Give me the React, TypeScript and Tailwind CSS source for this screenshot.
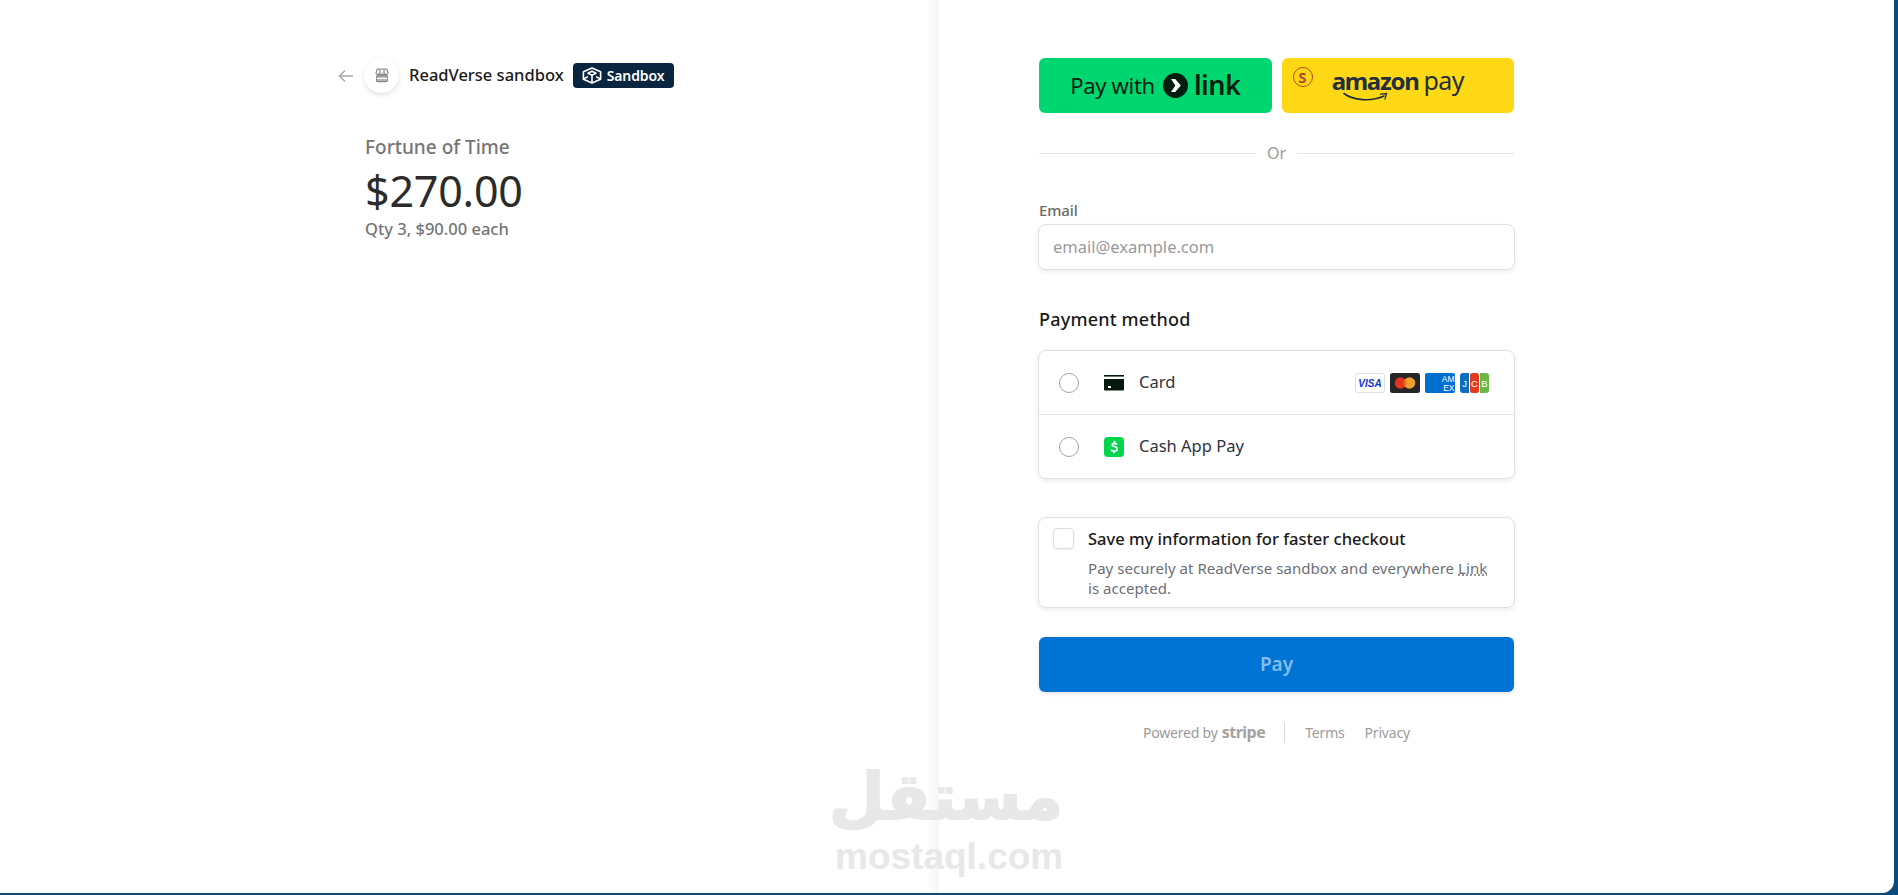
const sans = { fontFamily: '"Noto Sans", "Open Sans", sans-serif' };

const StoreIcon = () => (
  <svg width="14" height="15" viewBox="0 0 14 15" fill="none" stroke="#8a8a8a" strokeWidth="1.2">
    <path d="M2.2 1h9.6l1.2 4a1.6 1.6 0 0 1-3 .6 1.6 1.6 0 0 1-3 0 1.6 1.6 0 0 1-3 0 1.6 1.6 0 0 1-3-.6z" />
    <path d="M5 1v4.5M9 1v4.5" />
    <rect x="1.6" y="7.6" width="10.8" height="6" rx="1" fill="#b5b5b5" stroke="#8a8a8a" />
    <path d="M1.8 10.4h10.4" stroke="#fff" />
  </svg>
);

const SandboxIcon = () => (
  <svg width="20" height="17" viewBox="0 0 20 17" fill="none" stroke="#fff" strokeWidth="1.6" strokeLinejoin="round">
    <path d="M10 1l8.6 3.8v7.4L10 16l-8.6-3.8V4.8z" />
    <path d="M6 6.2l4-1.9 4 1.9-4 2z" />
    <path d="M1.6 12L6 9.6M18.4 12L14 9.6M10 8.2V16" />
  </svg>
);

const CardIcon = () => (
  <svg width="20" height="16" viewBox="0 0 20 16">
    <rect x="0" y="0" width="20" height="1.6" fill="#06190f" />
    <path d="M0 4h20v10.4a1 1 0 0 1-1 1H1a1 1 0 0 1-1-1z" fill="#06190f" />
    <rect x="4" y="11" width="3" height="2" fill="#fff" />
  </svg>
);

const CashAppIcon = () => (
  <svg width="20" height="20" viewBox="0 0 20 20">
    <rect width="20" height="20" rx="4" fill="#00d54b" />
    <path d="M13.2 7.4A4.6 4.6 0 0 0 10.4 6.4c-1.3 0-2.2.6-2.2 1.5 0 2.1 5 1.1 5 4 0 1.3-1.2 2.2-3.1 2.2a5 5 0 0 1-3.2-1.1" fill="none" stroke="#fff" strokeWidth="1.7" />
    <path d="M10.6 3.8v2.4M9.8 13.8v2.4" stroke="#fff" strokeWidth="1.7" />
  </svg>
);

const Visa = () => (
  <svg width="30" height="20" viewBox="0 0 30 20">
    <rect x="0.5" y="0.5" width="29" height="19" rx="2" fill="#fff" stroke="#dcdfe3" />
    <text x="15" y="14" textAnchor="middle" fontSize="10" fontWeight="700" fontStyle="italic" fill="#1434cb" fontFamily="Liberation Sans, sans-serif">VISA</text>
  </svg>
);

const Mastercard = () => (
  <svg width="30" height="20" viewBox="0 0 30 20">
    <rect width="30" height="20" rx="2.5" fill="#252525" />
    <circle cx="10.5" cy="10" r="5.8" fill="#e5321c" />
    <circle cx="19.5" cy="10" r="5.8" fill="#eba12c" />
    <path d="M15 6.3a5.8 5.8 0 0 1 0 7.4 5.8 5.8 0 0 1 0-7.4z" fill="#ef6a1f" />
  </svg>
);

const Amex = () => (
  <svg width="30" height="20" viewBox="0 0 30 20">
    <rect width="30" height="20" rx="2" fill="#016fd0" />
    <text x="29.5" y="9" textAnchor="end" fontSize="8.5" fill="#fff" fontFamily="Liberation Sans, sans-serif">AM</text>
    <text x="29.5" y="17.5" textAnchor="end" fontSize="8.5" fill="#fff" fontFamily="Liberation Sans, sans-serif">EX</text>
  </svg>
);

const Jcb = () => (
  <svg width="29" height="20" viewBox="0 0 29 20">
    <path d="M3 0h6v20H3a3 3 0 0 1-3-3V3a3 3 0 0 1 3-3z" fill="#0b6fc2" />
    <rect x="10" width="9" height="20" rx="2.5" fill="#e53a22" />
    <path d="M20 0h6a3 3 0 0 1 3 3v14a3 3 0 0 1-3 3h-6z" fill="#6cb847" />
    <text x="4.5" y="14" textAnchor="middle" fontSize="9.5" fill="#fff" fontFamily="Liberation Sans, sans-serif">J</text>
    <text x="14.5" y="14" textAnchor="middle" fontSize="9.5" fill="#fff" fontFamily="Liberation Sans, sans-serif">C</text>
    <text x="24.5" y="14" textAnchor="middle" fontSize="9.5" fill="#fff" fontFamily="Liberation Sans, sans-serif">B</text>
  </svg>
);

const LinkChevron = () => (
  <svg width="25" height="25" viewBox="0 0 25 25">
    <circle cx="12.5" cy="12.5" r="12.5" fill="#011e0f" />
    <path d="M8 6h4.2l5.6 6.5-5.6 6.5H8l4.4-6.5z" fill="#fff" />
  </svg>
);

const Smile = () => (
  <svg width="46" height="10" viewBox="0 0 46 10" fill="none" stroke="#232f3e" strokeLinecap="round">
    <path d="M1 1.5C10 8.5 28 10 41 4" strokeWidth="1.6" />
    <path d="M37.5 2.2L43.5 1.6 42 7.2" strokeWidth="1.3" />
  </svg>
);

const Radio = () => (
  <span className="block w-5 h-5 rounded-full border-[1.5px] border-[#a3a3a3] bg-white shrink-0" />
);

export default function App() {
  return (
    <div className="w-full h-[895px] bg-[#0b4a7c] overflow-hidden pr-1 pb-[2px] text-[#30313d]" style={sans}>
      <div className="relative w-full h-full bg-white rounded-br-xl flex overflow-hidden">
        <div className="w-[939px] h-full shrink-0 bg-white bg-gradient-to-r from-white from-[98.6%] to-[#f6f6f6] pl-[338px] pt-[58px]">
          <div className="flex items-center h-[35px]">
            <svg width="16" height="14" viewBox="0 0 16 14" fill="none" stroke="#a8a8a8" strokeWidth="1.5">
              <path d="M15 7H1.5M7 1.5L1.5 7 7 12.5" />
            </svg>
            <div className="ml-[10px] w-[35px] h-[35px] rounded-full bg-white shadow-[0_2px_5px_rgba(0,0,0,0.12)] flex items-center justify-center">
              <StoreIcon />
            </div>
            <span className="ml-[10px] text-[16.5px] font-medium text-[#1a1a1a]">ReadVerse sandbox</span>
            <div className="ml-[9px] h-[25px] w-[101px] rounded-[4px] bg-[#0a2540] flex items-center justify-center gap-[5px]">
              <SandboxIcon />
              <span className="text-[14px] font-semibold tracking-[-0.1px] text-white">Sandbox</span>
            </div>
          </div>
          <div className="ml-[27px] mt-[42px]">
            <div className="text-[19px] leading-[24px] text-[#757575] font-medium">Fortune of Time</div>
            <div className="text-[43px] leading-[52px] mt-[6px] tracking-[-0.2px] text-[#2b2b2b]">$270.00</div>
            <div className="text-[16.5px] leading-[22px] mt-[1px] text-[#757575] font-medium">Qty 3, $90.00 each</div>
          </div>
        </div>

        <div className="w-[475px] ml-[100px] pt-[58px]">
          <div className="flex gap-[10px]">
            <div className="flex-1 h-[55px] rounded-[6px] bg-[#00d66f] flex items-center justify-center text-[#011e0f]">
              <span className="text-[22px] tracking-[-0.3px] mr-2">Pay with</span>
              <LinkChevron />
              <span className="text-[27px] font-semibold tracking-[-0.5px] ml-[6px]">link</span>
            </div>
            <div className="relative flex-1 h-[55px] rounded-[6px] bg-[#ffd815] flex items-center justify-center text-[#232f3e]">
              <span className="absolute left-[11px] top-[9px] w-5 h-5 rounded-full border-[1.5px] border-[#b5482a] text-[#b5482a] text-[15px] font-bold flex items-center justify-center">S</span>
              <div className="relative ml-[0px] flex items-baseline h-[42px]">
                <span className="text-[24px] leading-[30px] font-bold tracking-[-1.3px]">amazon</span>
                <span className="text-[25px] leading-[30px] ml-[5px] tracking-[-0.6px]">pay</span>
                <span className="absolute left-[11px] top-[27px]"><Smile /></span>
              </div>
            </div>
          </div>

          <div className="flex items-center mt-[29px] h-[22px]">
            <div className="flex-1 h-px bg-[#e6e6e6]" />
            <span className="mx-[11px] text-[16px] text-[#9a9a9a]">Or</span>
            <div className="flex-1 h-px bg-[#e6e6e6]" />
          </div>

          <div className="mt-[37px] text-[15px] leading-[18px] font-medium tracking-[-0.1px] text-[#696969]">Email</div>
          <div className="-mx-px mt-[5px] h-[46px] rounded-[8px] border border-[#e0e0e0] shadow-[0_2px_5px_rgba(0,0,0,0.08)] flex items-center pl-[14px] pb-[-1px] text-[16.5px] text-[#9a9a9a]">
            email@example.com
          </div>

          <div className="mt-[37px] text-[18px] leading-[24px] font-medium tracking-[0.2px] text-[#1a1a1a]">Payment method</div>

          <div className="-mx-px mt-[19px] h-[129px] rounded-[8px] border border-[#e0e0e0] shadow-[0_2px_5px_rgba(0,0,0,0.08)] flex flex-col">
            <div className="h-[64px] flex items-center pl-[20px] pr-[25px] border-b border-[#e6e6e6]">
              <Radio />
              <span className="ml-[25px] w-5 flex justify-center"><CardIcon /></span>
              <span className="ml-[15px] text-[16.5px] text-[#30313d]">Card</span>
              <div className="ml-auto flex gap-[5px]">
                <Visa />
                <Mastercard />
                <Amex />
                <Jcb />
              </div>
            </div>
            <div className="flex-1 flex items-center pl-[20px]">
              <Radio />
              <span className="ml-[25px] w-5 flex justify-center"><CashAppIcon /></span>
              <span className="ml-[15px] text-[16.5px] text-[#30313d]">Cash App Pay</span>
            </div>
          </div>

          <div className="-mx-px mt-[38px] h-[91px] rounded-[8px] border border-[#e0e0e0] shadow-[0_2px_5px_rgba(0,0,0,0.08)] flex pl-[14px] pt-[10px]">
            <span className="block w-[21px] h-[21px] rounded-[4px] border border-[#dcdcdc] shadow-[0_1px_2px_rgba(0,0,0,0.08)] shrink-0" />
            <div className="ml-[14px]">
              <div className="text-[16.5px] leading-[22px] font-medium text-[#1a1a1a]">Save my information for faster checkout</div>
              <div className="mt-[8px] w-[410px] text-[15px] leading-[20px] tracking-[0.05px] text-[#6d6e78]">
                Pay securely at ReadVerse sandbox and everywhere{" "}
                <span className="underline decoration-dotted decoration-[#6d6e78]">Link</span> is accepted.
              </div>
            </div>
          </div>

          <div className="mt-[29px] h-[55px] rounded-[6px] bg-[#0074d4] shadow-[0_2px_4px_rgba(0,0,0,0.1)] flex items-center justify-center text-[19px] font-semibold text-[#84bce9]">
            Pay
          </div>

          <div className="mt-[29px] h-[22px] flex items-center text-[14px] tracking-[-0.2px] text-[#9b9b9b]">
            <span className="ml-[104px]">Powered by</span>
            <span className="ml-[4px] text-[16px] font-bold tracking-[-0.5px] text-[#a3a3a3]">stripe</span>
            <div className="ml-[19px] w-px h-[21px] bg-[#d9d9d9]" />
            <span className="ml-[20px]">Terms</span>
            <span className="ml-[20px]">Privacy</span>
          </div>
        </div>

        <div className="absolute left-[835px] top-[757px] w-[228px] text-center text-[#e8e8e8] pointer-events-none">
          <div dir="rtl" lang="ar" className="text-[64px] leading-[80px] font-bold [-webkit-text-stroke:2px_#e8e8e8]" style={{ fontFamily: '"DejaVu Sans", sans-serif' }}>مستقل</div>
          <div className="text-[37px] leading-[40px] font-bold whitespace-nowrap" style={{ fontFamily: '"Liberation Sans", sans-serif' }}>mostaql.com</div>
        </div>
      </div>
    </div>
  );
}
